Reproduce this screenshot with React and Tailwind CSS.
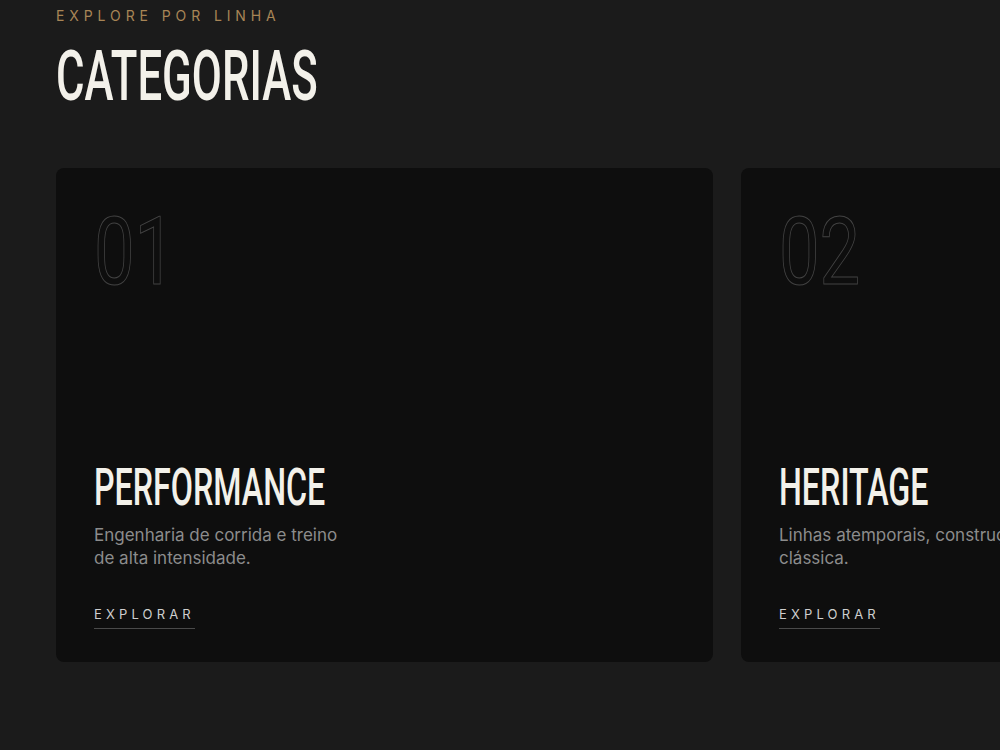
import React from "react";

const categories = [
  {
    number: "01",
    title: "PERFORMANCE",
    description: "Engenharia de corrida e treino de alta intensidade.",
  },
  {
    number: "02",
    title: "HERITAGE",
    description: "Linhas atemporais, construção clássica.",
  },
];

const condensed = { fontFamily: "Roboto, 'Liberation Sans', sans-serif" };

const CategoryCard = ({ item }) => {
  return (
    <div className="w-[657px] h-[494px] shrink-0 rounded-lg bg-[#0e0e0e] flex flex-col justify-between px-[38px] pt-[36px] pb-[33px]">
      {/* Number */}
      <div
        className="text-[95px] leading-none font-normal text-transparent [-webkit-text-stroke:1px_#434343] origin-left scale-x-[0.76] whitespace-nowrap"
        style={condensed}
      >
        {item.number}
      </div>

      {/* Bottom */}
      <div>
        <h3
          className="text-[52px] leading-none font-medium text-[#f3f1ea] origin-left scale-x-[0.62] whitespace-nowrap"
          style={condensed}
        >
          {item.title}
        </h3>

        <p className="mt-[10px] max-w-[260px] text-[17px] leading-[23px] text-[#8c8c8c] font-['Inter',sans-serif]">
          {item.description}
        </p>

        <a
          href="#"
          className="mt-[38px] inline-block border-b border-[#4a4a4a] pb-[7px] text-[13px] leading-none tracking-[0.32em] text-[#cfcfcf] font-['Inter',sans-serif]"
        >
          EXPLORAR
        </a>
      </div>
    </div>
  );
};

const App = () => {
  return (
    <div className="w-[1000px] h-[750px] overflow-hidden bg-[#1b1b1b]">
      <div className="pl-14 pt-[8px]">
        {/* Header */}
        <p className="text-[14px] leading-4 tracking-[0.35em] text-[#a88556] font-['Inter',sans-serif]">
          EXPLORE POR LINHA
        </p>

        <h2
          className="mt-[17px] text-[70px] leading-none font-medium text-[#f3f1ea] origin-left scale-x-[0.624] whitespace-nowrap"
          style={condensed}
        >
          CATEGORIAS
        </h2>

        {/* Cards */}
        <div className="mt-[57px] flex gap-7">
          {categories.map((item) => (
            <CategoryCard key={item.number} item={item} />
          ))}
        </div>
      </div>
    </div>
  );
};

export default App;
